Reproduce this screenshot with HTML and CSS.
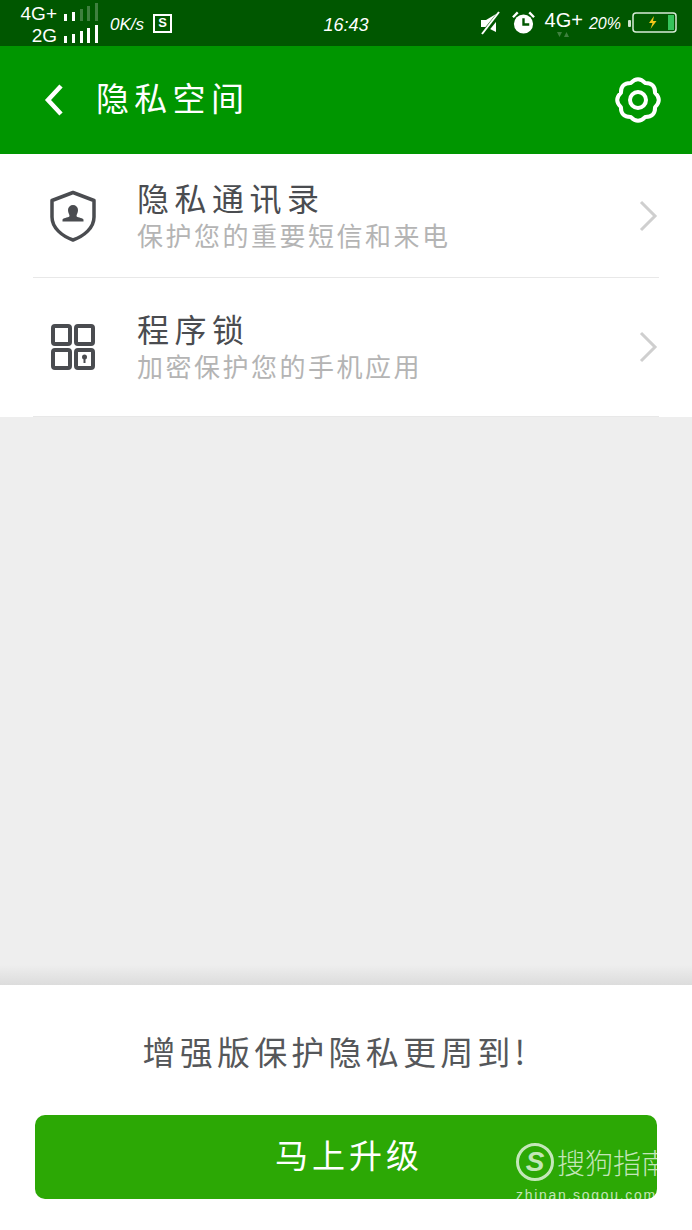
FILE: index.html
```html
<!DOCTYPE html>
<html lang="zh-CN">

<head>
    <meta charset="UTF-8">
    <title>隐私空间</title>
    <link rel="stylesheet" href="styles.css">
</head>

<body>
    <div class="status">
        <div class="status-left">
            <div class="nets">
                <div class="net">
                    <span>4G+</span>
                    <svg class="bars" width="34" height="20" viewBox="0 0 34 20">
                        <rect x="0" y="13" width="3" height="7" fill="#fff"/>
                        <rect x="8" y="11" width="3" height="9" fill="#fff"/>
                        <rect x="16" y="8" width="3" height="12" fill="#3f803f"/>
                        <rect x="23" y="5" width="3" height="15" fill="#3f803f"/>
                        <rect x="31" y="2" width="3" height="18" fill="#3f803f"/>
                    </svg>
                </div>
                <div class="net">
                    <span>2G</span>
                    <svg class="bars" width="34" height="20" viewBox="0 0 34 20">
                        <rect x="0" y="13" width="3" height="7" fill="#fff"/>
                        <rect x="8" y="11" width="3" height="9" fill="#fff"/>
                        <rect x="16" y="8" width="3" height="12" fill="#fff"/>
                        <rect x="23" y="5" width="3" height="15" fill="#fff"/>
                        <rect x="31" y="2" width="3" height="18" fill="#fff"/>
                    </svg>
                </div>
            </div>
            <span class="speed">0K/s</span>
            <span class="s-box">S</span>
        </div>
        <span class="time">16:43</span>
        <div class="status-right">
            <svg width="22" height="24" viewBox="0 0 22 24">
                <path d="M2 9h5l10-6v18l-10-5H2z" fill="#fff"/>
                <path d="M4 23L21 2" stroke="#005700" stroke-width="5"/>
                <path d="M3 23L20 1" stroke="#fff" stroke-width="2"/>
            </svg>
            <svg class="alarm" width="23" height="24" viewBox="0 0 24 24">
                <circle cx="12" cy="13" r="10" fill="#fff"/>
                <path d="M12 7v6.500h6" fill="none" stroke="#005700" stroke-width="2.500"/>
                <path d="M1 6l5-5M23 6l-5-5" stroke="#fff" stroke-width="2.500"/>
            </svg>
            <span class="net-main">4G+
                <svg class="arrows" width="14" height="7" viewBox="0 0 14 7">
                    <path d="M1 1h5L3.500 6zM8 6h5l-2.500-5z" fill="#3f803f"/>
                </svg>
            </span>
            <span class="pct">20%</span>
            <svg width="50" height="24" viewBox="0 0 50 24">
                <rect x="0" y="9" width="3" height="7" rx="1" fill="#cfe5cf"/>
                <rect x="5" y="2" width="43" height="19" rx="3" fill="none" stroke="#d8ecd8" stroke-width="1.500"/>
                <rect x="40" y="4" width="6" height="15" fill="#35c45a"/>
                <path d="M26 5l-5 7h3.500l-2 6 6-8h-3.500z" fill="#f3c71a"/>
            </svg>
        </div>
    </div>

    <header class="top">
        <svg class="back" width="20" height="34" viewBox="0 0 20 34">
            <path d="M17 3L4 17l13 14" fill="none" stroke="#fff" stroke-width="4.500"/>
        </svg>
        <h1>隐私空间</h1>
        <svg class="gear" width="48" height="48" viewBox="0 0 48 48">
            <path d="M31.080 6.910Q41.300 6.700 41.090 16.920Q48.500 24 41.090 31.080Q41.300 41.300 31.080 41.090Q24 48.500 16.920 41.090Q6.700 41.300 6.910 31.080Q-.5 24 6.910 16.920Q6.700 6.700 16.920 6.910Q24 -.5 31.080 6.910Z" fill="none" stroke="#fff" stroke-width="4" stroke-linejoin="round"/>
            <circle cx="24" cy="24" r="8" fill="none" stroke="#fff" stroke-width="4"/>
        </svg>
    </header>

    <div class="row row-contacts">
        <svg class="row-icon" width="48" height="52" viewBox="0 0 48 52">
            <path d="M24 2.500L45 10.500V27C45 38 35 46 24 50C13 46 3 38 3 27V10.500Z" fill="none" stroke="#4a4c50" stroke-width="3.500" stroke-linejoin="round"/>
            <path d="M24 15a5 5 0 0 1 5 5c0 3-1.500 4-1.500 6 0 1.500 5.500 1.500 7 3.500v2H13.500v-2c1.500-2 7-2 7-3.500 0-2-1.500-3-1.500-6a5 5 0 0 1 5-5z" fill="#4a4c50"/>
        </svg>
        <div class="row-text">
            <div class="row-title">隐私通讯录</div>
            <div class="row-sub">保护您的重要短信和来电</div>
        </div>
        <svg class="chevron" width="20" height="34" viewBox="0 0 20 34">
            <path d="M3 3l14 14L3 31" fill="none" stroke="#cfcfcf" stroke-width="3"/>
        </svg>
    </div>
    <div class="divider"></div>
    <div class="row row-lock">
        <svg class="row-icon" width="48" height="48" viewBox="0 0 48 48">
            <g fill="none" stroke="#4a4c50" stroke-width="4">
                <rect x="4" y="3" width="17" height="18" rx="2"/>
                <rect x="27" y="3" width="17" height="18" rx="2"/>
                <rect x="4" y="27" width="17" height="18" rx="2"/>
                <rect x="27" y="27" width="17" height="18" rx="2"/>
            </g>
            <circle cx="35.500" cy="34" r="2.500" fill="#4a4c50"/>
            <rect x="34.500" y="35" width="2" height="5" fill="#4a4c50"/>
        </svg>
        <div class="row-text">
            <div class="row-title">程序锁</div>
            <div class="row-sub">加密保护您的手机应用</div>
        </div>
        <svg class="chevron" width="20" height="34" viewBox="0 0 20 34">
            <path d="M3 3l14 14L3 31" fill="none" stroke="#cfcfcf" stroke-width="3"/>
        </svg>
    </div>
    <div class="divider"></div>

    <div class="empty"></div>

    <div class="upgrade">
        <p class="upgrade-text">增强版保护隐私更周到!</p>
        <div class="upgrade-btn">马上升级</div>
    </div>

    <div class="mark">
        <div class="mark-top">
            <span class="mark-logo">S</span>
            <span class="mark-name">搜狗指南</span>
        </div>
        <div class="mark-url">zhinan.sogou.com</div>
    </div>
</body>

</html>
```

FILE: styles.css
```css
* {
    margin: 0;
    padding: 0;
    box-sizing: border-box;
}

body {
    width: 692px;
    height: 1230px;
    display: flex;
    flex-direction: column;
    position: relative;
    overflow: hidden;
    background: #fff;
    font-family: "Noto Sans CJK SC", "Liberation Sans", sans-serif;
}

/* status bar */
.status {
    height: 46px;
    display: grid;
    grid-template-columns: 1fr auto 1fr;
    align-items: center;
    background: #005700;
    color: #fff;
}

.status-left {
    display: flex;
    align-items: center;
}

.nets {
    width: 98px;
    display: flex;
    flex-direction: column;
    align-items: flex-end;
    margin-top: -4px;
}

.net {
    height: 22px;
    display: flex;
    align-items: flex-end;
    font: 19px/22px "Liberation Sans", sans-serif;
}

.net span {
    margin-bottom: -4px;
}

.net .bars {
    margin-left: 7px;
}

.speed {
    margin: 4px 0 0 12px;
    font: italic 17px "Liberation Sans", sans-serif;
}

.s-box {
    width: 19px;
    height: 19px;
    margin-left: 9px;
    border: 2.500px solid #fff;
    font: bold 13px/14px "Liberation Sans", sans-serif;
    text-align: center;
}

.time,
.pct {
    font-family: "Liberation Sans", sans-serif;
    font-style: italic;
}

.time {
    margin-top: 4px;
    font-size: 18px;
}

.status-right {
    display: flex;
    align-items: center;
    justify-content: flex-end;
    padding-right: 14px;
}

.alarm {
    margin-left: 11px;
}

.net-main {
    position: relative;
    top: -3px;
    margin-left: 10px;
    font: 20px/24px "Liberation Sans", sans-serif;
}

.arrows {
    position: absolute;
    left: 11px;
    top: 23px;
}

.pct {
    margin: 2px 7px 0 6px;
    font-size: 16px;
}

/* title bar */
.top {
    height: 108px;
    display: flex;
    align-items: center;
    padding: 0 30px 0 44px;
    background: #009600;
    color: #fff;
}

.top h1 {
    flex: 1;
    margin-left: 32px;
    padding-bottom: 6px;
    font-size: 33px;
    font-weight: 400;
    letter-spacing: 5.300px;
    line-height: 44px;
}

/* list */
.row {
    display: flex;
    align-items: center;
    padding: 0 34px 0 49px;
}

.row-contacts {
    height: 123px;
}

.row-lock {
    height: 138px;
}

.row-text {
    flex: 1;
    margin-left: 40px;
    padding-bottom: 2px;
}

.row-title {
    font-size: 32px;
    letter-spacing: 5.500px;
    line-height: 40px;
    color: #4a4c50;
}

.row-sub {
    font-size: 26px;
    letter-spacing: 2.500px;
    line-height: 36px;
    color: #b4b4b4;
}

.divider {
    height: 1px;
    margin: 0 33px;
    background: #e8e8e8;
}

.empty {
    flex: 1;
    background: linear-gradient(#eee 0, #eee 548px, #dcdcdc 100%);
}

/* upgrade */
.upgrade {
    height: 245px;
    padding: 42px 35px 0;
}

.upgrade-text {
    padding-right: 20px;
    font-size: 33px;
    letter-spacing: 4.200px;
    line-height: 48px;
    text-align: center;
    color: #55575a;
}

.upgrade-btn {
    height: 84px;
    margin-top: 40px;
    padding-left: 6px;
    border-radius: 10px;
    background: #2ca805;
    color: #fff;
    font-size: 33px;
    letter-spacing: 4px;
    line-height: 78px;
    text-align: center;
}

/* watermark */
.mark {
    position: absolute;
    left: 516px;
    top: 1143px;
    width: 160px;
    color: rgba(255, 255, 255, 0.72);
}

.mark-top {
    display: flex;
    align-items: center;
    height: 38px;
}

.mark-logo {
    width: 38px;
    height: 38px;
    border: 3px solid rgba(255, 255, 255, 0.72);
    border-radius: 50%;
    font: italic bold 28px/31px "Liberation Sans", sans-serif;
    text-align: center;
}

.mark-name {
    margin-left: 3px;
    font-size: 28px;
    font-weight: 300;
    line-height: 38px;
    white-space: nowrap;
}

.mark-url {
    margin-top: 6px;
    font: 14px/16px "Liberation Sans", sans-serif;
    letter-spacing: 1.700px;
    white-space: nowrap;
}
```
